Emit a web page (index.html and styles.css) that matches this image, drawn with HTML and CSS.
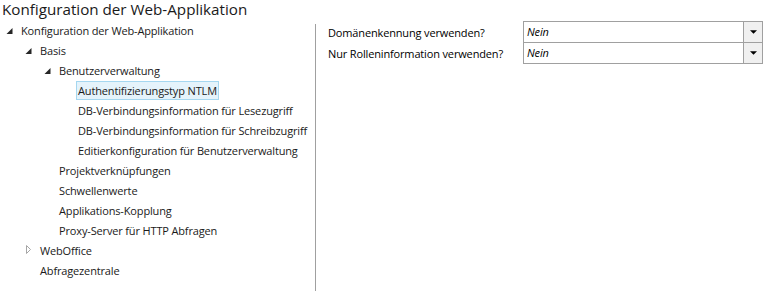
FILE: index.html
```html
<!doctype html>
<html lang="de">
<head>
  <meta charset="utf-8">
  <title>Konfiguration der Web-Applikation</title>
<link rel="stylesheet" href="styles.css">
</head>
<body>
  <h1 class="page-title">Konfiguration der Web-Applikation</h1>
  <div class="layout">
    <ul class="tree">
      <li class="node lvl0"><span class="twisty"><svg viewBox="0 0 19 20"><polygon points="12.5,8 12.5,14 6.5,14" class="open"/></svg></span><span class="label">Konfiguration der Web-Applikation</span></li>
      <li class="node lvl1"><span class="twisty"><svg viewBox="0 0 19 20"><polygon points="12.5,8 12.5,14 6.5,14" class="open"/></svg></span><span class="label">Basis</span></li>
      <li class="node lvl2"><span class="twisty"><svg viewBox="0 0 19 20"><polygon points="12.5,8 12.5,14 6.5,14" class="open"/></svg></span><span class="label">Benutzerverwaltung</span></li>
      <li class="node lvl3"><span class="twisty"></span><span class="label selected">Authentifizierungstyp NTLM</span></li>
      <li class="node lvl3"><span class="twisty"></span><span class="label">DB-Verbindungsinformation für Lesezugriff</span></li>
      <li class="node lvl3"><span class="twisty"></span><span class="label">DB-Verbindungsinformation für Schreibzugriff</span></li>
      <li class="node lvl3"><span class="twisty"></span><span class="label">Editierkonfiguration für Benutzerverwaltung</span></li>
      <li class="node lvl2"><span class="twisty"></span><span class="label">Projektverknüpfungen</span></li>
      <li class="node lvl2"><span class="twisty"></span><span class="label">Schwellenwerte</span></li>
      <li class="node lvl2"><span class="twisty"></span><span class="label">Applikations-Kopplung</span></li>
      <li class="node lvl2"><span class="twisty"></span><span class="label">Proxy-Server für HTTP Abfragen</span></li>
      <li class="node lvl1"><span class="twisty"><svg viewBox="0 0 19 20"><polygon points="7.5,5.5 11.5,9.5 7.5,13.5" class="closed"/></svg></span><span class="label">WebOffice</span></li>
      <li class="node lvl1"><span class="twisty"></span><span class="label">Abfragezentrale</span></li>
    </ul>
    <div class="divider"></div>
    <div class="settings">
      <div class="setting">
        <span class="setting-name">Domänenkennung verwenden?</span>
        <div class="combo"><span class="combo-value">Nein</span><span class="combo-button"><svg viewBox="0 0 8 4"><polygon points="0,0 8,0 4,4"/></svg></span></div>
      </div>
      <div class="setting">
        <span class="setting-name">Nur Rolleninformation verwenden?</span>
        <div class="combo"><span class="combo-value">Nein</span><span class="combo-button"><svg viewBox="0 0 8 4"><polygon points="0,0 8,0 4,4"/></svg></span></div>
      </div>
    </div>
  </div>
</body>
</html>
```

FILE: styles.css
```css
* {
  box-sizing: border-box;
}

body {
  margin: 0;
  background: #fff;
  color: #1a1a1a;
  font-family: "Open Sans", "Noto Sans", sans-serif;
  font-size: 11px;
  letter-spacing: -0.15px;
}

.page-title {
  margin: 0;
  padding: 0 0 0 2px;
  height: 20px;
  font-size: 15.2px;
  font-weight: normal;
  line-height: 18px;
  letter-spacing: 0;
  color: #1a1a1a;
  white-space: nowrap;
}

.layout {
  display: flex;
  align-items: flex-start;
}

.tree {
  list-style-type: none;
  margin: 0;
  padding: 0;
  width: 315px;
  flex: none;
}

.node {
  display: flex;
  align-items: center;
  height: 20px;
}

.lvl1 { padding-left: 19px; }
.lvl2 { padding-left: 38px; }
.lvl3 { padding-left: 57px; }

.twisty {
  width: 19px;
  height: 20px;
  flex: none;
}

.twisty svg {
  display: block;
  width: 19px;
  height: 20px;
}

.open {
  fill: #262626;
}

.closed {
  fill: none;
  stroke: #a6a6a6;
  stroke-width: 1;
}

.label {
  border: 1px solid transparent;
  padding: 0 1px;
  line-height: 17px;
  white-space: nowrap;
}

.label.selected {
  background-color: #e5f3fb;
  border-color: #a5d7f0;
}

.divider {
  width: 1px;
  height: 267px;
  margin-top: 4px;
  background: #a0a0a0;
  flex: none;
}

.settings {
  padding: 1px 0 0 12px;
  display: flex;
  flex-direction: column;
}

.setting {
  display: flex;
  align-items: center;
}

.setting + .setting {
  margin-top: -1px;
}

.setting-name {
  width: 195px;
  white-space: nowrap;
  color: #000;
}

.combo {
  display: flex;
  width: 240px;
  height: 22px;
  border: 1px solid #a0a0a0;
  background: #fff;
}

.combo-value {
  flex: 1;
  padding-left: 3px;
  font-style: italic;
  line-height: 19px;
  color: #000;
}

.combo-button {
  width: 19px;
  border-left: 1px solid #a0a0a0;
  background: #f0f0f0;
  display: flex;
  align-items: center;
  justify-content: center;
}

.combo-button svg {
  width: 7px;
  height: 4px;
  fill: #000;
}
```
